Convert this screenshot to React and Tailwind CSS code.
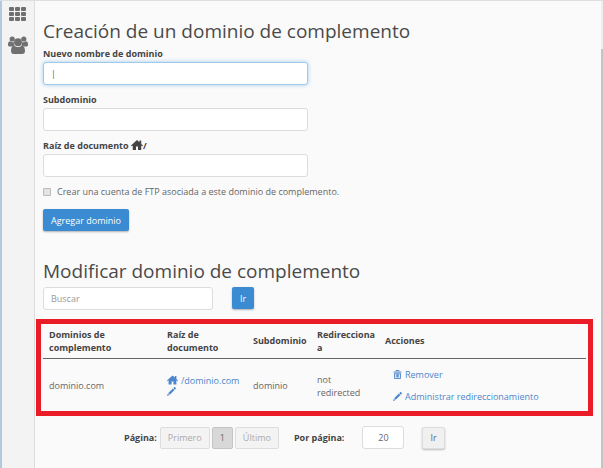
import React from 'react';

const inputClass =
  'block h-[23px] rounded-[3px] border bg-white px-[7px] text-[9px] text-[#666] outline-none placeholder:text-[#999]';
const primaryButton =
  'h-[22px] rounded-[2px] bg-[#3a8bd2] px-2 text-[9px] text-white shadow-[0_1px_2px_rgba(0,0,0,0.3)]';
const pageButton = 'h-[22px] rounded-[2px] border px-[7px] text-[9px]';

export default function App() {
  return (
    <div className="flex min-h-screen border-t border-[#dedede] bg-[#fafafa] font-['Open_Sans',sans-serif] text-[9px] leading-[13px] text-[#666]">
      <Sidebar />

      <main className="min-w-0 flex-1 px-2 pt-4">
        <h1 className="mb-[2px] text-[19px] leading-7 text-[#4a4a4a]">Creación de un dominio de complemento</h1>
        <form onSubmit={(e) => e.preventDefault()}>
          <Field id="domain" label="Nuevo nombre de dominio" focused />
          <Field id="subdomain" label="Subdominio" />
          <Field id="root" label={<>Raíz de documento <HomeIcon className="inline h-[10px] w-[12px] align-[-1px]" />/</>} />

          <label className="flex items-center gap-[6px]">
            <input
              type="checkbox"
              className="size-2 appearance-none rounded-[1px] border border-[#bbb] bg-[#e4e4e4]"
            />
            Crear una cuenta de FTP asociada a este dominio de complemento.
          </label>
          <button type="submit" className={`${primaryButton} mt-[11px]`}>Agregar dominio</button>
        </form>

        <h2 className="mt-[26px] text-[19px] leading-7 text-[#4a4a4a]">Modificar dominio de complemento</h2>
        <form className="mt-[2px] flex gap-[19px]" onSubmit={(e) => e.preventDefault()}>
          <input aria-label="Buscar" placeholder="Buscar" className={`${inputClass} w-[170px] border-[#dcdcdc]`} />
          <button type="submit" className={primaryButton}>Ir</button>
        </form>

        <DomainTable />
        <Pagination />
      </main>

      {/* Scrollbar */}
      <div className="flex w-[2px] bg-[#eee] pt-12">
        <div className="w-full bg-[#c4c4c4]" />
      </div>
    </div>
  );
}

function Sidebar() {
  return (
    <nav className="flex w-[35px] shrink-0 flex-col items-center gap-[14px] border-l-2 border-r border-l-[#b5c9de] border-r-[#dcdcdc] bg-[#f3f3f3] pt-[6px] text-[#707070]">
      <a href="#apps" aria-label="Aplicaciones">
        <svg viewBox="0 0 18 15" className="h-[15px] w-[18px]" fill="currentColor">
          {[0, 5, 10].map((y) =>
            [0, 6, 12].map((x) => <rect key={`${x}-${y}`} x={x} y={y} width="5" height="4" rx="1" />)
          )}
        </svg>
      </a>
      <a href="#users" aria-label="Usuarios">
        <svg viewBox="0 0 20 18" className="h-[18px] w-[20px]" fill="currentColor">
          <circle cx="4.2" cy="3" r="2.6" />
          <circle cx="15.8" cy="3" r="2.6" />
          <path d="M0 8.4C0 6 1 5.3 2 5.3c1.2 1 3 1.1 4 .6-.2 1.5.1 2.6.8 3.5C5.6 9.500 4.600 10 4 10.500H1.600C.6 10.500 0 9.700 0 8.400zM20 8.400c0-2.400-1-3.100-2-3.100-1.200 1-3 1.100-4 .6.2 1.500-.1 2.600-.8 3.500 1.200.1 2.200.6 2.800 1.100h2.400c1 0 1.600-.8 1.600-2.100z" />
          <circle cx="10" cy="6.2" r="3.900" />
          <path d="M3 15c0-3.400 1.200-5.200 3.300-5.200 2.100 1.700 5.300 1.700 7.400 0C15.800 9.800 17 11.600 17 15c0 1.900-1 3-2.600 3H5.600C4 18 3 16.900 3 15z" />
        </svg>
      </a>
    </nav>
  );
}

function Field({ id, label, focused = false }) {
  return (
    <div className="mb-2">
      <label htmlFor={id} className="mb-[2px] block font-bold text-[#444]">{label}</label>
      {focused ? (
        <input
          id={id}
          defaultValue="|"
          className={`${inputClass} w-[265px] border-[#a3c9e8] shadow-[0_0_4px_rgba(102,175,233,0.6)]`}
        />
      ) : (
        <input id={id} className={`${inputClass} w-[265px] border-[#dcdcdc]`} />
      )}
    </div>
  );
}

function DomainTable() {
  return (
    <div className="-ml-[7px] mt-[9px] border-[5px] border-[#ea1c27] px-[2px]">
      <table className="w-full table-fixed text-left">
        <thead className="text-[#444]">
          <tr className="h-[34px] border-b border-[#666]">
            <th className="w-[118px] pl-[6px]">Dominios de<br />complemento</th>
            <th className="w-[86px] pl-[6px]">Raíz de<br />documento</th>
            <th className="w-[64px] pl-[6px]">Subdominio</th>
            <th className="w-[68px] pl-[6px]">Redirecciona<br />a</th>
            <th className="pl-[6px]">Acciones</th>
          </tr>
        </thead>
        <tbody>
          <tr className="h-[53px]">
            <td className="pl-[6px] pt-[2px]">dominio.com</td>
            <td className="pl-[6px]">
              <a href="#root" className="flex items-center gap-[3px] text-[#4c86cc]">
                <HomeIcon className="h-[10px] w-[11px]" />/dominio.com
              </a>
              <a href="#edit" aria-label="Editar" className="block text-[#4c86cc]">
                <PencilIcon className="block size-[9px]" />
              </a>
            </td>
            <td className="pl-[6px] pt-[2px]">dominio</td>
            <td className="pl-[6px] pt-[2px]">not<br />redirected</td>
            <td className="pl-[14px] pt-[2px]">
              <a href="#remove" className="mb-[9px] flex items-center gap-[3px] text-[#4c86cc]">
                <TrashIcon className="size-[9px]" />Remover
              </a>
              <a href="#redirect" className="flex items-center gap-[3px] text-[#4c86cc]">
                <PencilIcon className="size-[9px]" />Administrar redireccionamiento
              </a>
            </td>
          </tr>
        </tbody>
      </table>
    </div>
  );
}

function Pagination() {
  return (
    <div className="ml-[81px] mt-[10px] flex items-center">
      <span className="mr-[3px] font-bold text-[#444]">Página:</span>
      <div className="flex gap-[2px]">
        <button disabled className={`${pageButton} border-[#ddd] bg-[#f3f3f3] text-[#aaa]`}>Primero</button>
        <button className={`${pageButton} border-[#c4c4c4] bg-[#d8d8d8]`}>1</button>
        <button disabled className={`${pageButton} border-[#ddd] bg-[#f3f3f3] text-[#aaa]`}>Último</button>
      </div>
      <label htmlFor="perPage" className="ml-[15px] font-bold text-[#444]">Por página:</label>
      <input id="perPage" defaultValue="20" className={`${inputClass} ml-[18px] w-[42px] border-[#dcdcdc] text-center`} />
      <button className={`${pageButton} ml-[18px] border-[#ddd] bg-[#f0f0f0] shadow-[0_1px_2px_rgba(0,0,0,0.25)]`}>Ir</button>
    </div>
  );
}

function HomeIcon({ className }) {
  return (
    <svg viewBox="0 0 24 20" className={className} fill="currentColor">
      <path d="M12 0l5 4.600V1h3.500v6.800L24 11l-1.500 1.600-2-1.800V20H14v-7h-4v7H3.500v-9.200l-2 1.800L0 11z" />
    </svg>
  );
}

function PencilIcon({ className }) {
  return (
    <svg viewBox="0 0 18 18" className={className} fill="currentColor">
      <path d="M14.200.6c.7-.7 1.300-.7 2 0l1.200 1.200c.7.7.7 1.300 0 2L15.900 5.300l-3.200-3.200zM11.800 3L15 6.200 5.500 15.700 2.300 12.500zM1.600 13.300l3.100 3.100L0 18z" />
    </svg>
  );
}

function TrashIcon({ className }) {
  return (
    <svg viewBox="0 0 18 18" className={className} fill="none" stroke="currentColor" strokeWidth="1.800">
      <path d="M6 3V1h6v2M1 4h16M3 6.500h12V17H3zM6.500 8v7M9 8v7M11.500 8v7" />
    </svg>
  );
}
